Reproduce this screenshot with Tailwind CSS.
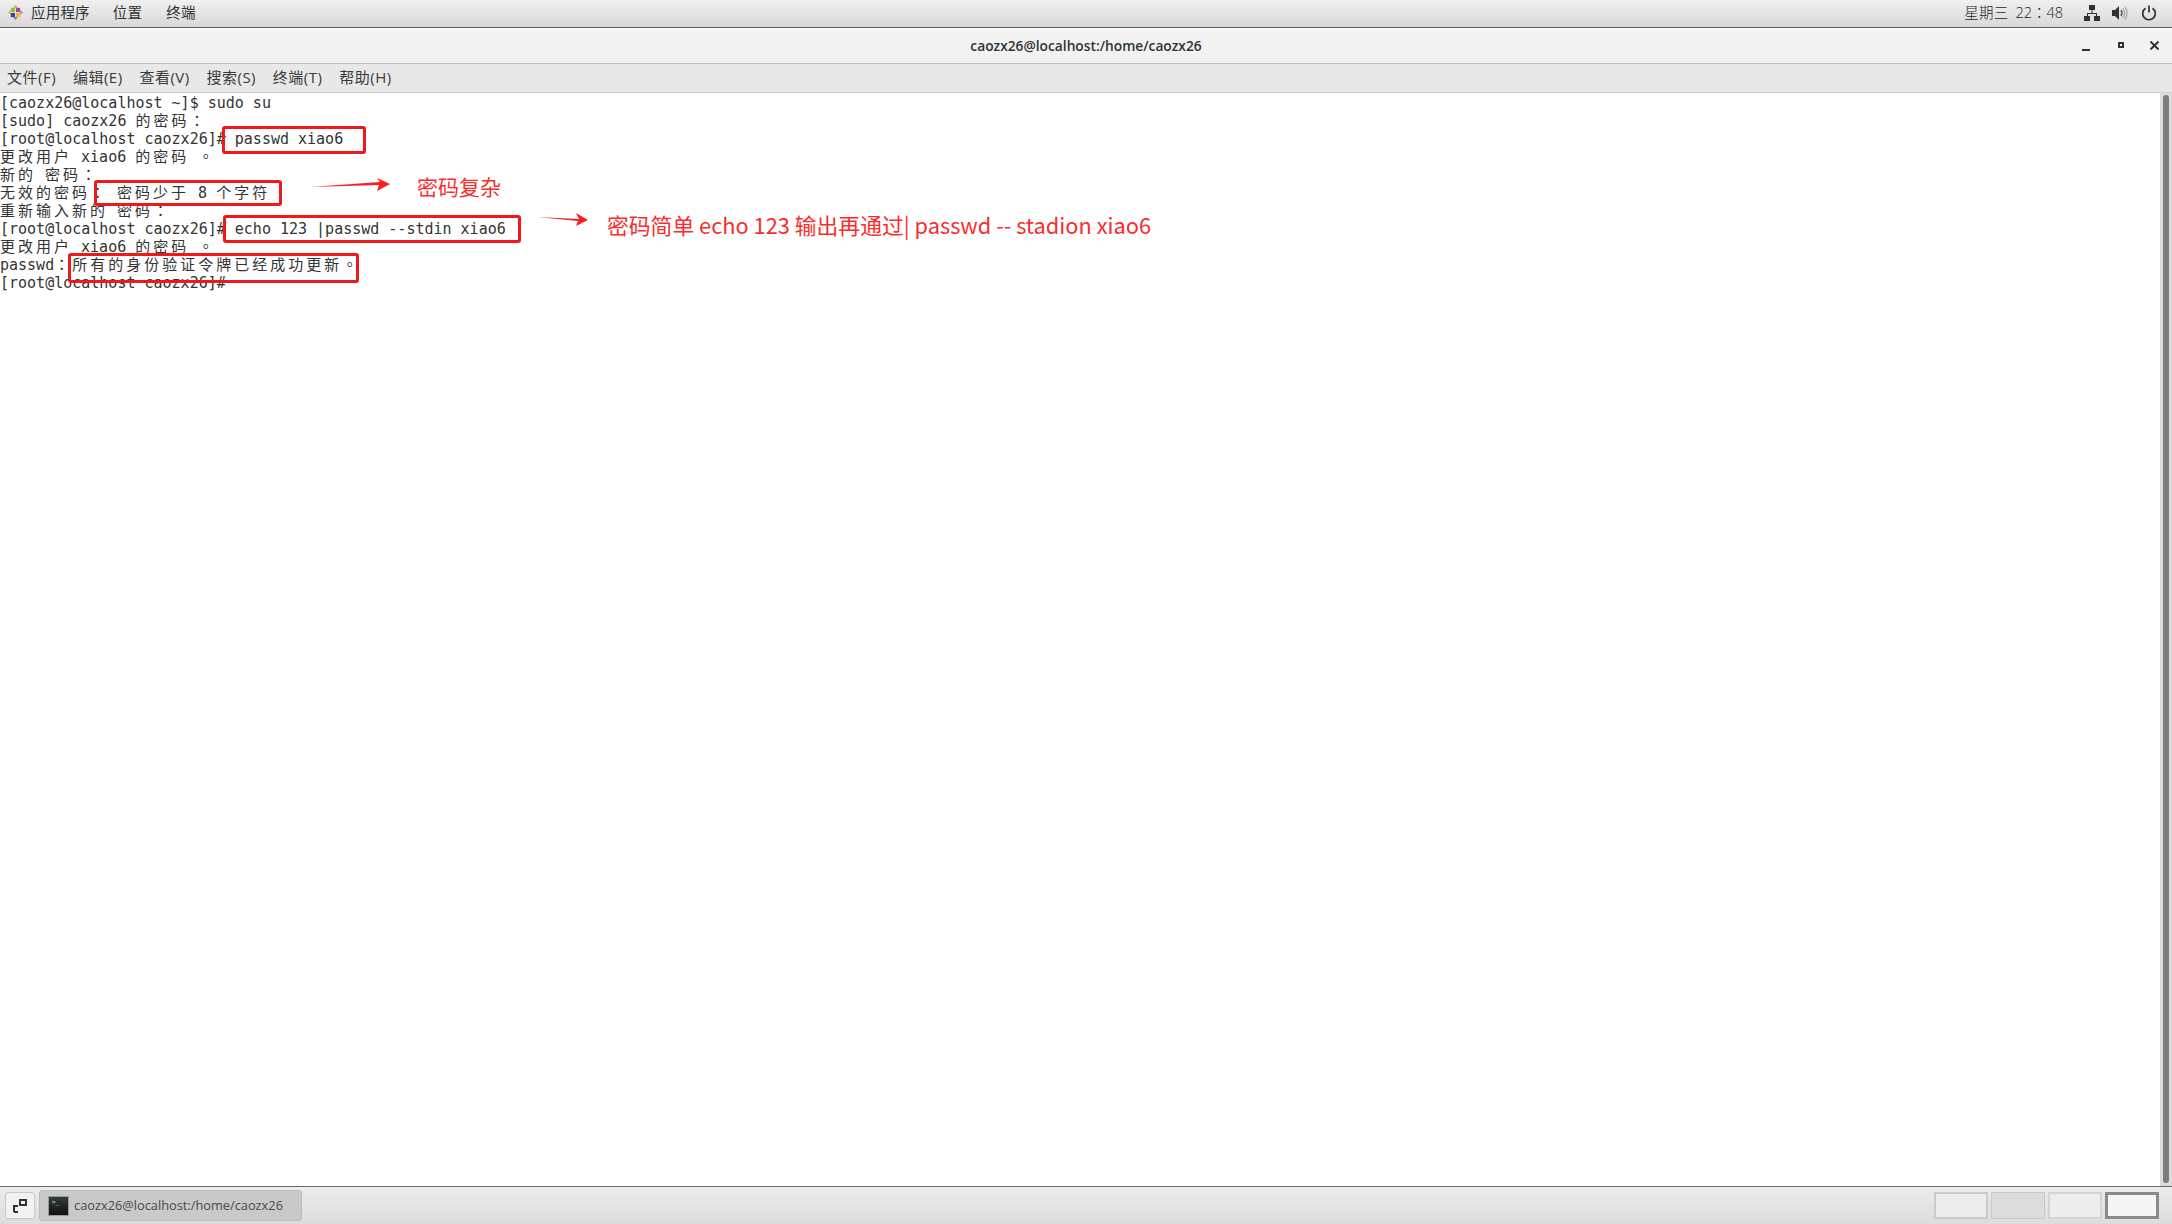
<!DOCTYPE html>
<html>
<head>
<meta charset="utf-8">
<script src="https://cdn.jsdelivr.net/npm/@tailwindcss/browser@4"></script>
</head>
<body class="overflow-hidden bg-white">
<div class="relative flex h-[1224px] w-[2172px] flex-col overflow-hidden font-['Open_Sans','Noto_Sans_CJK_SC',sans-serif] text-[#2e3436]">

  <!-- top bar -->
  <div class="flex h-[28px] shrink-0 items-center justify-between border-b border-[#5a5a5a] bg-gradient-to-b from-[#f0f0f0] to-[#d8d8d8] pb-[2px] pl-[8px] pr-[15px] text-[14.5px]">
    <div class="flex items-center">
      <svg class="h-[15px] w-[15px]" viewBox="0 0 16 16">
        <path d="M8 0L10.500 3H5.500Z" fill="#d9a04a"/>
        <path d="M8 16L10.500 13H5.500Z" fill="#8a6bb0"/>
        <path d="M0 8L3 5.500V10.500Z" fill="#a8c060"/>
        <path d="M16 8L13 5.500V10.500Z" fill="#c87aa8"/>
        <rect x="3" y="3" width="4.500" height="4.500" fill="#9bbb3b"/>
        <rect x="8.500" y="3" width="4.500" height="4.500" fill="#a8478f"/>
        <rect x="3" y="8.500" width="4.500" height="4.500" fill="#3f3f9a"/>
        <rect x="8.500" y="8.500" width="4.500" height="4.500" fill="#f1b92e"/>
      </svg>
      <span class="ml-[8px] tracking-[0.2px]">应用程序</span>
      <span class="ml-[23px] tracking-[0.2px]">位置</span>
      <span class="ml-[24px] tracking-[0.2px]">终端</span>
    </div>
    <div class="flex items-center">
      <span class="font-light tracking-[0.2px] text-[#1f2325]">星期三</span>
      <span class="ml-[7px] font-light text-[#1f2325]">22<span class="font-['Noto_Sans_CJK_TC']">：</span>48</span>
      <svg class="ml-[21px] h-[16px] w-[16px]" viewBox="0 0 16 16" fill="#2e3436">
        <rect x="5" y="0" width="6" height="5"/>
        <rect x="0" y="11" width="6" height="5"/>
        <rect x="10" y="11" width="6" height="5"/>
        <path d="M7.500 5h1v3H13v3h-1V9H4v2H3V8h4.500z"/>
      </svg>
      <svg class="ml-[12px] h-[16px] w-[16px]" viewBox="0 0 16 16" fill="none">
        <path d="M0 5h3l4-4v14l-4-4H0z" fill="#2e3436"/>
        <path d="M9 5q2 3 0 6" stroke="#555" stroke-width="1.400"/>
        <path d="M11 3q3 5 0 10M13 1.500q4 6.500 0 13" stroke="#aaa" stroke-width="1.400"/>
      </svg>
      <svg class="ml-[13px] h-[16px] w-[16px]" viewBox="0 0 16 16" fill="none" stroke="#2e3436" stroke-width="1.700">
        <path d="M4.500 3.200a6.300 6.300 0 1 0 7 0"/>
        <path d="M8 0.500v7"/>
      </svg>
    </div>
  </div>

  <!-- title bar -->
  <div class="relative flex h-[36px] shrink-0 items-center justify-center border-t border-white border-b border-b-[#bdbdbd] bg-[#f2f2f2]">
    <span class="text-[13.75px] font-semibold text-[#2e3436]">caozx26@localhost:/home/caozx26</span>
    <div class="absolute right-[13px] top-[12px] flex items-start">
      <span class="mt-[8px] block h-[2px] w-[8px] bg-[#2e3436]"></span>
      <span class="ml-[28px] mt-[1px] block h-[6px] w-[6px] border-2 border-[#2e3436]"></span>
      <svg class="ml-[26px] h-[9px] w-[9px]" viewBox="0 0 9 9" stroke="#2e3436" stroke-width="2"><path d="M0.500 0.500l8 8M8.500 0.500l-8 8"/></svg>
    </div>
  </div>

  <!-- menu bar -->
  <div class="flex h-[29px] shrink-0 items-center gap-[16.800px] border-b border-[#d0d0d0] bg-[#e8e8e8] pb-[1px] pl-[7px] text-[15px] tracking-[0.5px] text-[#3a3a3a]">
    <span>文件(F)</span><span>编辑(E)</span><span>查看(V)</span><span>搜索(S)</span><span>终端(T)</span><span>帮助(H)</span>
  </div>

  <!-- terminal -->
  <div class="flex min-h-0 flex-1">
    <div class="flex-1 bg-white pt-[1px] font-['DejaVu_Sans_Mono','Noto_Sans_CJK_SC',monospace] text-[15px] leading-[18px] text-[#333] [&>div]:h-[18px] [&>div]:whitespace-pre">
      <div>[caozx26@localhost ~]$ sudo su</div>
      <div>[sudo] caozx26 <span class="tracking-[3px]">的密码<span class="font-['Noto_Sans_CJK_TC'] leading-[1px]">：</span></span></div>
      <div>[root@localhost caozx26]# passwd xiao6</div>
      <div><span class="tracking-[3px]">更改用户</span> xiao6 <span class="tracking-[3px]">的密码</span> <span class="font-['Noto_Sans_CJK_TC'] leading-[1px] tracking-[3px]">。</span></div>
      <div><span class="tracking-[3px]">新的</span> <span class="tracking-[3px]">密码<span class="font-['Noto_Sans_CJK_TC'] leading-[1px]">：</span></span></div>
      <div><span class="tracking-[3px]">无效的密码<span class="font-['Noto_Sans_CJK_TC'] leading-[1px]">：</span></span> <span class="tracking-[3px]">密码少于</span> 8 <span class="tracking-[3px]">个字符</span></div>
      <div><span class="tracking-[3px]">重新输入新的</span> <span class="tracking-[3px]">密码<span class="font-['Noto_Sans_CJK_TC'] leading-[1px]">：</span></span></div>
      <div>[root@localhost caozx26]# echo 123 |passwd --stdin xiao6</div>
      <div><span class="tracking-[3px]">更改用户</span> xiao6 <span class="tracking-[3px]">的密码</span> <span class="font-['Noto_Sans_CJK_TC'] leading-[1px] tracking-[3px]">。</span></div>
      <div>passwd<span class="tracking-[3px]"><span class="font-['Noto_Sans_CJK_TC'] leading-[1px]">：</span>所有的身份验证令牌已经成功更新<span class="font-['Noto_Sans_CJK_TC'] leading-[1px]">。</span></span></div>
      <div>[root@localhost caozx26]#</div>
    </div>
    <div class="w-[12px] shrink-0 bg-[#dcdcdc] px-[3px] pt-[2px] pb-[3px]">
      <div class="h-full rounded-full bg-[#7d7d7d]"></div>
    </div>
  </div>

  <!-- task bar -->
  <div class="flex h-[38px] shrink-0 items-center border-t border-[#6a6a6a] bg-gradient-to-b from-[#ececec] to-[#dcdcdc] pl-[5px] pr-[13px]">
    <div class="flex h-[27px] w-[30px] items-center justify-center rounded-[3px] border border-[#c8c8c8] bg-[#f2f2f2]">
      <svg class="h-[14px] w-[14px]" viewBox="0 0 14 14" fill="none" stroke="#2e3436" stroke-width="2">
        <rect x="7" y="1" width="6" height="5" fill="#f2f2f2"/>
        <path d="M1 13V7h4M1 13h4"/>
      </svg>
    </div>
    <div class="ml-[4px] flex h-[31px] w-[263px] items-center rounded-[3px] border border-[#bcbcbc] bg-[#c9c9c9] pl-[8px] text-[12.800px] font-normal text-[#444]">
      <div class="relative h-[20px] w-[21px] border border-[#999] bg-gradient-to-b from-[#2f3f3a] to-[#111]">
        <span class="absolute left-[3px] top-[1px] font-['DejaVu_Sans_Mono'] text-[6px] leading-[8px] text-white">&gt;_</span>
      </div>
      <span class="ml-[5px] text-[#4a4a4a]">caozx26@localhost:/home/caozx26</span>
    </div>
    <div class="ml-auto flex gap-[3px]">
      <div class="h-[27px] w-[54px] border-2 border-[#cacaca] bg-[#ededed]"></div>
      <div class="h-[27px] w-[54px] border border-[#cacaca] bg-[#dbdbdb]"></div>
      <div class="h-[27px] w-[54px] border-2 border-[#d4d4d4] bg-[#ededed]"></div>
      <div class="h-[27px] w-[54px] border-[3px] border-[#8a8a8a] bg-[#f5f5f5]"></div>
    </div>
  </div>

  <!-- annotations over the screenshot -->
  <div class="absolute left-[222px] top-[126px] h-[28px] w-[144px] rounded-[3px] border-[3px] border-[#f01818]"></div>
  <div class="absolute left-[94px] top-[180px] h-[26px] w-[188px] rounded-[3px] border-[3px] border-[#f01818]"></div>
  <div class="absolute left-[223px] top-[215px] h-[28px] w-[298px] rounded-[3px] border-[3px] border-[#f01818]"></div>
  <div class="absolute left-[68px] top-[253px] h-[30px] w-[291px] rounded-[3px] border-[3px] border-[#f01818]"></div>
  <svg class="absolute left-[300px] top-[170px] h-[90px] w-[300px]" viewBox="0 0 300 90" fill="#fa1e1e">
    <path d="M10 17L80 12L77 8L90 14L77 21L79 15Z"/>
    <path d="M237 47L279 49L276 43L288 50L276 56L278 51Z"/>
  </svg>
  <div class="absolute left-[417px] top-[171px] font-['Noto_Sans_CJK_SC',sans-serif] text-[21px] leading-[30px] text-[#fa2d2d]">密码复杂</div>
  <div class="absolute left-[607px] top-[210px] font-['Noto_Sans_CJK_SC',sans-serif] text-[21.8px] leading-[30px] text-[#fa2d2d] whitespace-pre">密码简单 echo 123 输出再通过| passwd -- stadion xiao6</div>
</div>
</body>
</html>
